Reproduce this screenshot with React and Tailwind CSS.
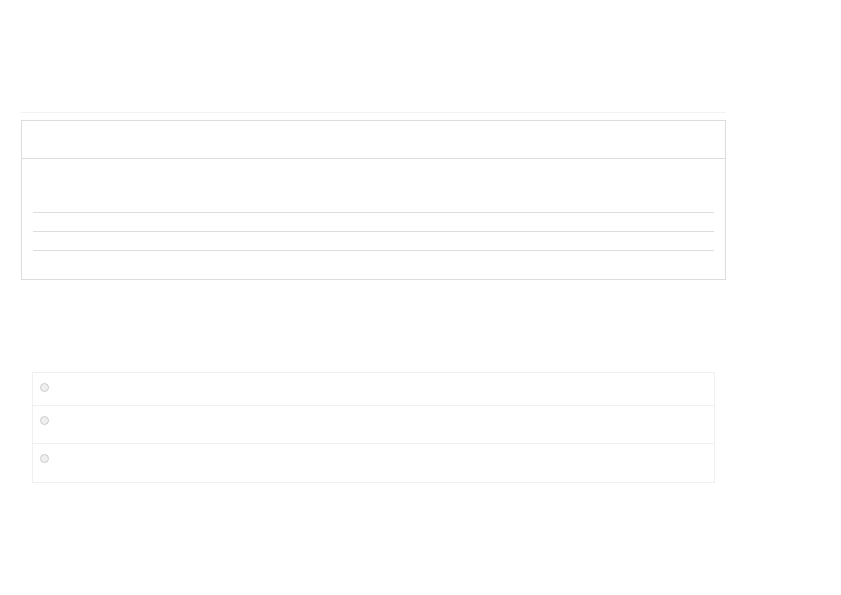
export default function App() {
  const lines = [0, 1, 2];
  const rows = ["h-[32px]", "h-[38px]", "h-[39px]"];

  return (
    <div className="w-[841px] h-[595px] bg-white" style={{ fontFamily: '"Liberation Sans", Arial, sans-serif' }}>
      <div className="pt-[112px] pl-[21px]">
        {/* Panel */}
        <div className="w-[705px] border-t border-[#f3f3f3] pt-[7px]">
          <div className="border border-[#dddddd]">
            <div className="h-[38px] border-b border-[#dddddd]"></div>
            <div className="px-[11px] pt-[53px] pb-[10px]">
              {lines.map((i) => (
                <div key={i} className="h-[19px] border-t border-[#dddddd]"></div>
              ))}
            </div>
          </div>
        </div>

        {/* Options list */}
        <div className="mt-[92px] ml-[11px] w-[683px] border border-[#f0f0f0]">
          {rows.map((h, i) => (
            <div
              key={i}
              className={`${h} flex items-start pl-[7px] pt-[10px] ${i > 0 ? "border-t border-[#f0f0f0]" : ""}`}
            >
              <span className="w-[9px] h-[9px] rounded-full border border-[#cccccc] bg-[#efefef]"></span>
            </div>
          ))}
        </div>
      </div>
    </div>
  );
}
